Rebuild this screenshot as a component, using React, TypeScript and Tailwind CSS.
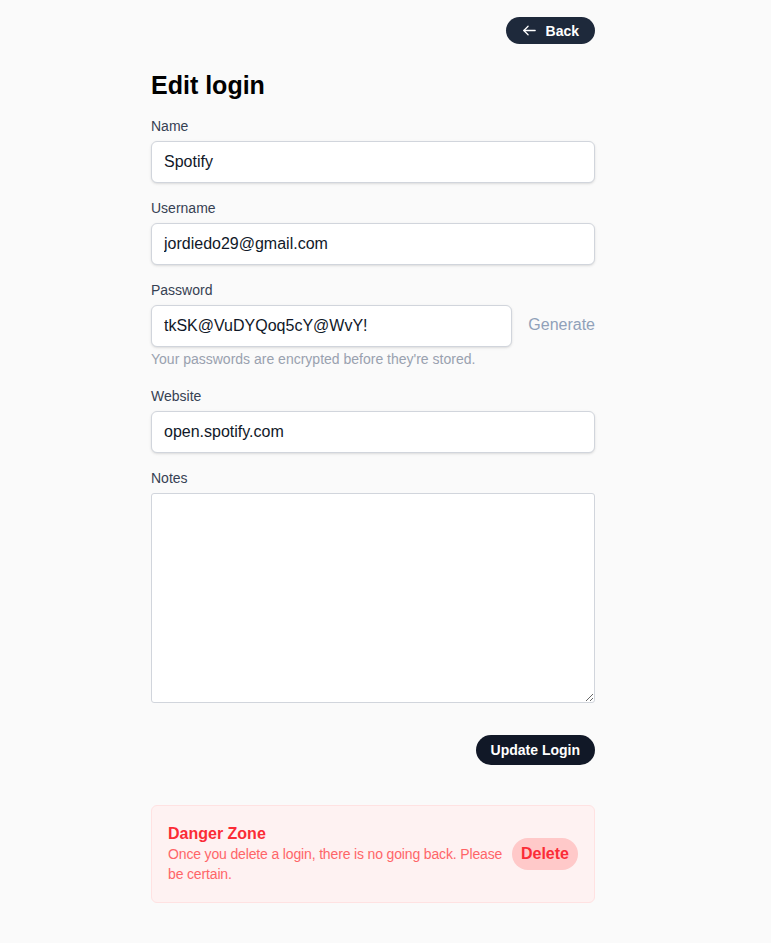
import React from "react";

const Field = ({ label, value }: { label: string; value: string }) => (
  <div className="mb-[15px]">
    <label className="block text-sm leading-5 text-gray-700 mb-[5px]">{label}</label>
    <input
      readOnly
      value={value}
      className="w-full h-[42px] rounded-md border border-gray-300 bg-white px-3 text-base text-gray-900 outline-none shadow-sm"
    />
  </div>
);

const App = () => {
  return (
    <div
      className="min-h-[943px] bg-[#fafafa]"
      style={{ fontFamily: '"Liberation Sans", Arial, sans-serif' }}
    >
      <div className="ml-[151px] w-[444px] pt-[17px]">
        <div className="flex justify-end">
          <button className="flex items-center gap-[8px] h-[27px] rounded-full bg-[#1e293b] pl-[15px] pr-[16px] text-sm font-bold text-white">
            <svg width="17" height="17" viewBox="0 0 24 24" fill="none" stroke="currentColor" strokeWidth="1.8" strokeLinecap="round" strokeLinejoin="round">
              <path d="M20 12H4" />
              <path d="M10 18l-6-6 6-6" />
            </svg>
            Back
          </button>
        </div>

        <h1 className="mt-[26px] text-[25px] leading-[30px] font-extrabold text-black">Edit login</h1>

        <div className="mt-[16px]">
          <Field label="Name" value="Spotify" />
          <Field label="Username" value="jordiedo29@gmail.com" />

          <div className="mb-[17px]">
            <label className="block text-sm leading-5 text-gray-700 mb-[5px]">Password</label>
            <div className="flex items-center gap-4">
              <input
                readOnly
                value="tkSK@VuDYQoq5cY@WvY!"
                className="flex-1 h-[42px] rounded-md border border-gray-300 bg-white px-3 text-base text-gray-900 outline-none shadow-sm"
              />
              <span className="text-base text-slate-400 -mt-[3px]">Generate</span>
            </div>
            <p className="mt-[2px] text-sm leading-5 text-gray-400">
              Your passwords are encrypted before they're stored.
            </p>
          </div>

          <Field label="Website" value="open.spotify.com" />

          <div>
            <label className="block text-sm leading-5 text-gray-700 mb-[5px]">Notes</label>
            <textarea
              readOnly
              className="block w-full h-[210px] rounded-[3px] border border-gray-300 bg-white px-3 py-2 text-base outline-none"
            />
          </div>
        </div>

        <div className="mt-[32px] flex justify-end">
          <button className="h-[30px] rounded-full bg-[#111827] px-[15px] text-sm font-bold text-white">
            Update Login
          </button>
        </div>

        <div className="mt-[40px] flex items-center rounded-md border border-red-100 bg-red-50 pl-4 pr-4 h-[98px]">
          <div className="flex-1 pr-[4px]">
            <h2 className="text-base leading-5 font-bold text-red-500">Danger Zone</h2>
            <p className="text-sm leading-5 text-red-400 tracking-[-0.15px]">
              Once you delete a login, there is no going back. Please be certain.
            </p>
          </div>
          <button className="h-[32px] rounded-full bg-red-200 px-[9px] text-base font-bold text-red-500">
            Delete
          </button>
        </div>
      </div>
    </div>
  );
};

export default App;
